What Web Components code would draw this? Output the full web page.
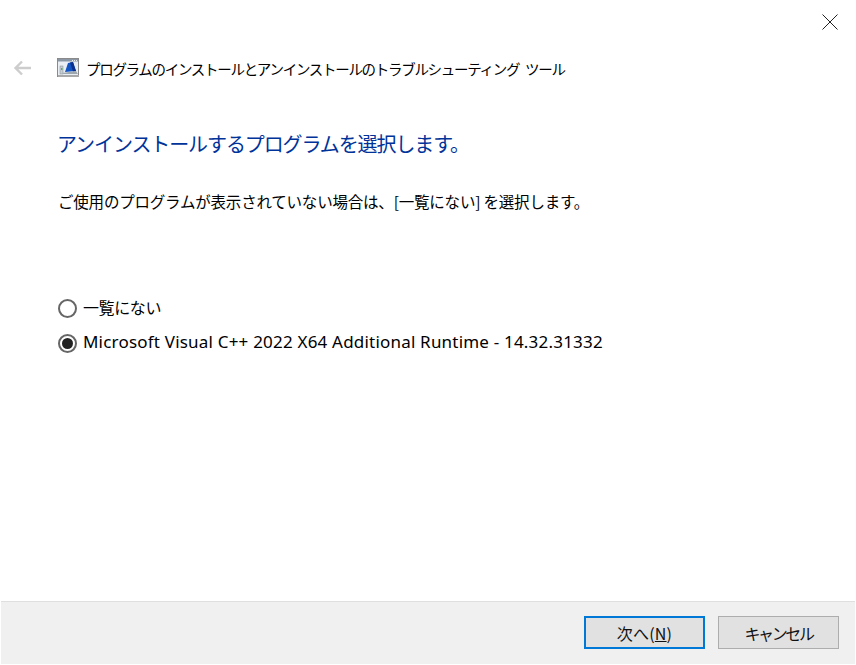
<!DOCTYPE html>
<html lang="ja">
<head>
<meta charset="utf-8">
<style>
html, body { margin: 0; padding: 0; background: #fff; }
body { font-family: "Noto Sans CJK JP", "Noto Sans", sans-serif; }
</style>
</head>
<body>
<wizard-window>
  <wizard-header slot="header">プログラムのインストールとアンインストールのトラブルシューティング ツール</wizard-header>
  <span slot="heading">アンインストールするプログラムを選択します。</span>
  <span slot="hint">ご使用のプログラムが表示されていない場合は、[一覧にない] を選択します。</span>
  <wizard-radio slot="options" jp>一覧にない</wizard-radio>
  <wizard-radio slot="options" checked>Microsoft Visual C++ 2022 X64 Additional Runtime - 14.32.31332</wizard-radio>
  <wizard-button slot="buttons" focused>次へ(<u>N</u>)</wizard-button>
  <wizard-button slot="buttons" tight>キャンセル</wizard-button>
</wizard-window>
<script>
class WizardWindow extends HTMLElement {
    constructor() {
        super();
        this.attachShadow({mode: 'open'});
        this.shadowRoot.innerHTML = `
        <style>
            :host {
                display: flex;
                flex-direction: column;
                width: 856px;
                height: 665px;
                background: #fff;
                color: #000;
            }
            .top {
                display: flex;
                justify-content: flex-end;
                height: 58px;
                padding: 14px 18px 0 0;
                box-sizing: border-box;
            }
            .top svg { display: block; }
            main {
                flex: 1;
                padding: 0 0 0 58px;
            }
            h1 {
                margin: 50px 0 0 -1px;
                font-size: 20px;
                line-height: 32px;
                font-weight: 400;
                color: #003399;
                letter-spacing: -1.1px;
            }
            p {
                margin: 30px 0 0;
                font-size: 15.5px;
                line-height: 22px;
                letter-spacing: -0.2px;
            }
            .options {
                display: flex;
                flex-direction: column;
                gap: 12px;
                margin-top: 83px;
            }
            footer {
                display: flex;
                justify-content: flex-end;
                gap: 13px;
                height: 63px;
                margin: 0 1px 1px;
                padding: 14px 16px 0 0;
                box-sizing: border-box;
                background: #f0f0f0;
                border-top: 1px solid #dfdfdf;
            }
        </style>
        <div class="top">
            <svg width="16" height="16" viewBox="0 0 16 16"><path d="M.5.5l15 15M15.5.5l-15 15" fill="none" stroke="#222" stroke-width="1"/></svg>
        </div>
        <slot name="header"></slot>
        <main>
            <h1><slot name="heading"></slot></h1>
            <p><slot name="hint"></slot></p>
            <div class="options"><slot name="options"></slot></div>
        </main>
        <footer><slot name="buttons"></slot></footer>
    `;
    }
}

class WizardHeader extends HTMLElement {
    constructor() {
        super();
        this.attachShadow({mode: 'open'});
        this.shadowRoot.innerHTML = `
        <style>
            :host {
                display: flex;
                align-items: center;
                height: 20px;
                padding: 0 0 0 13px;
                font-size: 14.5px;
                letter-spacing: -1.3px;
                word-spacing: 4px;
                white-space: nowrap;
            }
            .back { display: block; margin-right: 25px; }
            .icon { display: block; margin-right: 6px; }
        </style>
        <svg class="back" width="19" height="16" viewBox="0 0 19 16">
            <path d="M9 1.5L2.5 8 9 14.5M2.5 8H18" fill="none" stroke="#cdcdcd" stroke-width="2.4"/>
        </svg>
        <svg class="icon" width="23" height="20" viewBox="0 0 23 20">
            <rect x=".5" y=".5" width="21" height="18" fill="#e9eef4" stroke="#8a8a8a"/>
            <rect x="1" y="1" width="20" height="2.500" fill="#8b97a5"/>
            <path d="M15 2h1v1h-1zM17 2h1v1h-1zM19 2h1v1h-1z" fill="#e8edf2"/>
            <rect x="1" y="17" width="21" height="2" fill="#a9a9a9"/>
            <path d="M8 14l3-9 5-1 3 9z" fill="#1254c4"/>
            <path d="M13 4.600l3-.6 3 9-3 .6z" fill="#0b2f8a"/>
            <path d="M5 15l14-2 2 3H7z" fill="#9fa7ae"/>
            <rect x="3" y="8" width="3" height="8" fill="#c6cdd3" stroke="#7d8a8e" stroke-width=".5"/>
            <rect x="4" y="10" width="1.4" height="2" fill="#4caf50"/>
        </svg>
        <span><slot></slot></span>
    `;
    }
}

class WizardRadio extends HTMLElement {
    constructor() {
        super();
        this.attachShadow({mode: 'open'});
        this.shadowRoot.innerHTML = `
        <style>
            :host {
                display: flex;
                align-items: center;
                gap: 6px;
                height: 23px;
                font-size: 17px;
                letter-spacing: 0.2px;
                white-space: nowrap;
            }
            :host([jp]) { font-size: 16px; letter-spacing: -0.4px; }
            .dot {
                flex: none;
                box-sizing: border-box;
                width: 19px;
                height: 19px;
                margin-top: 4px;
                border: 2px solid #666;
                border-radius: 50%;
                display: flex;
                align-items: center;
                justify-content: center;
            }
            .dot i { display: none; width: 11px; height: 11px; border-radius: 50%; background: #222; }
            :host([checked]) .dot i { display: block; }
            span { font-family: "Noto Sans", "Noto Sans CJK JP", sans-serif; }
            :host([jp]) span { font-family: "Noto Sans CJK JP", sans-serif; }
        </style>
        <div class="dot"><i></i></div>
        <span><slot></slot></span>
    `;
    }
}

class WizardButton extends HTMLElement {
    constructor() {
        super();
        this.attachShadow({mode: 'open'});
        this.shadowRoot.innerHTML = `
        <style>
            :host {
                display: flex;
                align-items: center;
                justify-content: center;
                box-sizing: border-box;
                width: 121px;
                height: 33px;
                background: #e1e1e1;
                border: 1px solid #adadad;
                font-size: 16px;
                letter-spacing: 0.2px;
                color: #111;
                white-space: nowrap;
            }
            :host([tight]) { letter-spacing: -2.4px; }
            :host([focused]) { border: 2px solid #0078d7; }
        </style>
        <slot></slot>
    `;
    }
}

customElements.define('wizard-window', WizardWindow);
customElements.define('wizard-header', WizardHeader);
customElements.define('wizard-radio', WizardRadio);
customElements.define('wizard-button', WizardButton);
</script>
</body>
</html>
